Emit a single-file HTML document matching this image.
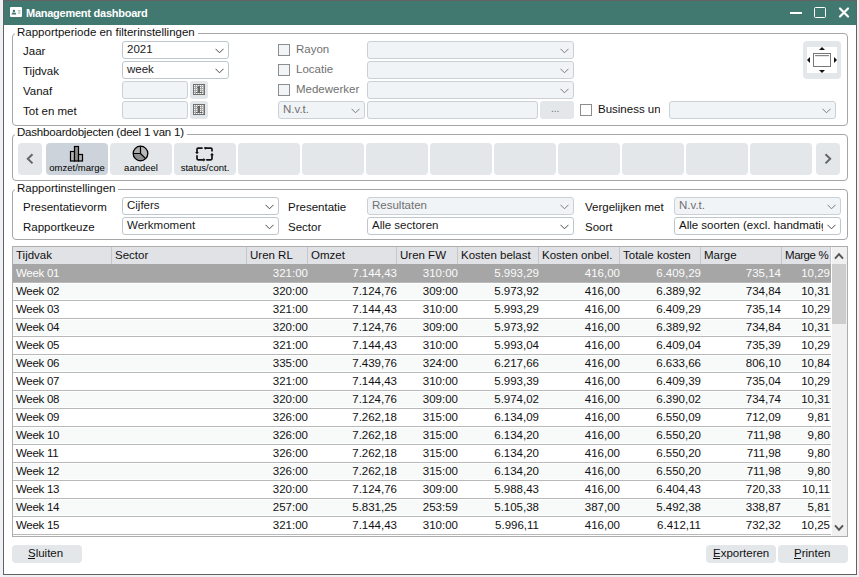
<!DOCTYPE html>
<html><head><meta charset="utf-8"><style>
html,body{margin:0;padding:0;}
body{width:859px;height:577px;position:relative;overflow:hidden;background:#eef2f4;font-family:"Liberation Sans",sans-serif;font-size:11px;color:#111;}
.b{position:absolute;}
.t{position:absolute;white-space:nowrap;line-height:14px;font-size:11.5px;}
.r{text-align:right;}
.g{color:#707070;}
.w{color:#fbfbfb;}
u{text-decoration:none;border-bottom:1px solid #1a1a1a;}
</style></head><body>

<div class="b" style="left:3px;top:0px;width:854px;height:575px;background:#ffffff;border:1px solid #646262;box-sizing:border-box"></div>
<div class="b" style="left:4px;top:1px;width:852px;height:24px;background:#417870"></div>
<svg class="b" style="left:10px;top:7px" width="12" height="10" viewBox="0 0 12 10"><rect x="0" y="0" width="12" height="10" rx="1" fill="#fff"/><circle cx="3.9" cy="3.9" r="1.2" fill="#417870"/><path d="M1.6 7.6 L1.6 6.9 Q1.6 5.6 3.9 5.6 Q6.2 5.6 6.2 6.9 L6.2 7.6 Z" fill="#417870"/><rect x="7.8" y="3.2" width="2.8" height="1.2" fill="#9fb9b5"/><rect x="7.8" y="5.4" width="2.8" height="1.2" fill="#9fb9b5"/></svg>
<div class="t" style="left:26px;top:6px;font-weight:bold;color:#fff;letter-spacing:-0.25px;font-size:11px">Management dashboard</div>
<div class="b" style="left:790px;top:12px;width:12px;height:2px;background:#fff"></div>
<div class="b" style="left:814px;top:7px;width:12px;height:11px;border:1.8px solid #fff;box-sizing:border-box;border-radius:1.5px"></div>
<svg class="b" style="left:838px;top:7px" width="12" height="11" viewBox="0 0 12 11"><path d="M2 1.5 L10 9.5 M10 1.5 L2 9.5" stroke="#fff" stroke-width="2.2" stroke-linecap="round"/></svg>
<div class="b" style="left:12px;top:33px;width:836px;height:93px;border:1px solid #a6a6a6;border-radius:4px;box-sizing:border-box"></div>
<div class="t " style="left:15px;top:25px;padding:0 3px 0 2px;background:linear-gradient(to bottom,transparent 7px,#fff 7px,#fff 10px,transparent 10px)">Rapportperiode en filterinstellingen</div>
<div class="b" style="left:12px;top:134px;width:836px;height:47px;border:1px solid #a6a6a6;border-radius:4px;box-sizing:border-box"></div>
<div class="t " style="left:15px;top:125px;letter-spacing:-0.2px;padding:0 3px 0 2px;background:linear-gradient(to bottom,transparent 8px,#fff 8px,#fff 11px,transparent 11px)">Dashboardobjecten (deel 1 van 1)</div>
<div class="b" style="left:12px;top:189px;width:836px;height:51px;border:1px solid #a6a6a6;border-radius:4px;box-sizing:border-box"></div>
<div class="t " style="left:15px;top:181px;padding:0 3px 0 2px;background:linear-gradient(to bottom,transparent 7px,#fff 7px,#fff 10px,transparent 10px)">Rapportinstellingen</div>
<div class="t " style="left:23px;top:44px;">Jaar</div>
<div class="t " style="left:23px;top:64px;">Tijdvak</div>
<div class="t " style="left:23px;top:84px;">Vanaf</div>
<div class="t " style="left:23px;top:104px;">Tot en met</div>
<div class="b" style="left:122px;top:41px;width:107px;height:18px;background:#ffffff;border:1px solid #bfc7ce;border-radius:3px;box-sizing:border-box"></div>
<div class="t " style="left:127px;top:42px;color:#1a1a1a">2021</div>
<svg class="b" style="left:215px;top:48px" width="9" height="6" viewBox="0 0 9 6"><path d="M0.5 0.8 L4.5 4.8 L8.5 0.8" fill="none" stroke="#4a4a4a" stroke-width="1"/></svg>
<div class="b" style="left:122px;top:61px;width:107px;height:18px;background:#ffffff;border:1px solid #bfc7ce;border-radius:3px;box-sizing:border-box"></div>
<div class="t " style="left:127px;top:62px;color:#1a1a1a">week</div>
<svg class="b" style="left:215px;top:68px" width="9" height="6" viewBox="0 0 9 6"><path d="M0.5 0.8 L4.5 4.8 L8.5 0.8" fill="none" stroke="#4a4a4a" stroke-width="1"/></svg>
<div class="b" style="left:122px;top:81px;width:66px;height:18px;background:#f1f4f7;border:1px solid #c9d0d6;border-radius:3px;box-sizing:border-box"></div>
<div class="b" style="left:122px;top:101px;width:66px;height:18px;background:#f1f4f7;border:1px solid #c9d0d6;border-radius:3px;box-sizing:border-box"></div>
<div class="b" style="left:190px;top:81px;width:18px;height:18px;background:#e3e7ea;border-radius:3px"></div>
<svg class="b" style="left:193px;top:84px" width="12" height="11" viewBox="0 0 12 11" shape-rendering="crispEdges"><rect x="0" y="0" width="12" height="11" fill="#707070"/><rect x="1" y="1" width="10" height="9" fill="#a8a8a8"/><rect x="1" y="1" width="1" height="1" fill="#f4f4f4"/><rect x="3" y="1" width="1" height="1" fill="#f4f4f4"/><rect x="5" y="1" width="1" height="1" fill="#f4f4f4"/><rect x="7" y="1" width="1" height="1" fill="#f4f4f4"/><rect x="9" y="1" width="1" height="1" fill="#f4f4f4"/><rect x="1" y="3" width="1" height="1" fill="#f4f4f4"/><rect x="3" y="3" width="1" height="1" fill="#f4f4f4"/><rect x="5" y="3" width="1" height="1" fill="#f4f4f4"/><rect x="7" y="3" width="1" height="1" fill="#f4f4f4"/><rect x="9" y="3" width="1" height="1" fill="#f4f4f4"/><rect x="1" y="5" width="1" height="1" fill="#f4f4f4"/><rect x="3" y="5" width="1" height="1" fill="#f4f4f4"/><rect x="5" y="5" width="1" height="1" fill="#f4f4f4"/><rect x="7" y="5" width="1" height="1" fill="#f4f4f4"/><rect x="9" y="5" width="1" height="1" fill="#f4f4f4"/><rect x="1" y="7" width="1" height="1" fill="#f4f4f4"/><rect x="3" y="7" width="1" height="1" fill="#f4f4f4"/><rect x="5" y="7" width="1" height="1" fill="#f4f4f4"/><rect x="7" y="7" width="1" height="1" fill="#f4f4f4"/><rect x="9" y="7" width="1" height="1" fill="#f4f4f4"/><rect x="1" y="9" width="1" height="1" fill="#f4f4f4"/><rect x="3" y="9" width="1" height="1" fill="#f4f4f4"/><rect x="5" y="9" width="1" height="1" fill="#f4f4f4"/><rect x="7" y="9" width="1" height="1" fill="#f4f4f4"/><rect x="9" y="9" width="1" height="1" fill="#f4f4f4"/><rect x="5" y="2" width="2" height="7" fill="#666"/><rect x="4" y="3" width="1" height="1" fill="#666"/><rect x="3" y="8" width="6" height="1" fill="#666"/></svg>
<div class="b" style="left:190px;top:101px;width:18px;height:18px;background:#e3e7ea;border-radius:3px"></div>
<svg class="b" style="left:193px;top:104px" width="12" height="11" viewBox="0 0 12 11" shape-rendering="crispEdges"><rect x="0" y="0" width="12" height="11" fill="#707070"/><rect x="1" y="1" width="10" height="9" fill="#a8a8a8"/><rect x="1" y="1" width="1" height="1" fill="#f4f4f4"/><rect x="3" y="1" width="1" height="1" fill="#f4f4f4"/><rect x="5" y="1" width="1" height="1" fill="#f4f4f4"/><rect x="7" y="1" width="1" height="1" fill="#f4f4f4"/><rect x="9" y="1" width="1" height="1" fill="#f4f4f4"/><rect x="1" y="3" width="1" height="1" fill="#f4f4f4"/><rect x="3" y="3" width="1" height="1" fill="#f4f4f4"/><rect x="5" y="3" width="1" height="1" fill="#f4f4f4"/><rect x="7" y="3" width="1" height="1" fill="#f4f4f4"/><rect x="9" y="3" width="1" height="1" fill="#f4f4f4"/><rect x="1" y="5" width="1" height="1" fill="#f4f4f4"/><rect x="3" y="5" width="1" height="1" fill="#f4f4f4"/><rect x="5" y="5" width="1" height="1" fill="#f4f4f4"/><rect x="7" y="5" width="1" height="1" fill="#f4f4f4"/><rect x="9" y="5" width="1" height="1" fill="#f4f4f4"/><rect x="1" y="7" width="1" height="1" fill="#f4f4f4"/><rect x="3" y="7" width="1" height="1" fill="#f4f4f4"/><rect x="5" y="7" width="1" height="1" fill="#f4f4f4"/><rect x="7" y="7" width="1" height="1" fill="#f4f4f4"/><rect x="9" y="7" width="1" height="1" fill="#f4f4f4"/><rect x="1" y="9" width="1" height="1" fill="#f4f4f4"/><rect x="3" y="9" width="1" height="1" fill="#f4f4f4"/><rect x="5" y="9" width="1" height="1" fill="#f4f4f4"/><rect x="7" y="9" width="1" height="1" fill="#f4f4f4"/><rect x="9" y="9" width="1" height="1" fill="#f4f4f4"/><rect x="5" y="2" width="2" height="7" fill="#666"/><rect x="4" y="3" width="1" height="1" fill="#666"/><rect x="3" y="8" width="6" height="1" fill="#666"/></svg>
<div class="b" style="left:278px;top:44px;width:12px;height:12px;background:#f2f5f7;border:1px solid #8c8c8c;box-sizing:border-box"></div>
<div class="t g" style="left:296px;top:42px;">Rayon</div>
<div class="b" style="left:278px;top:64px;width:12px;height:12px;background:#f2f5f7;border:1px solid #8c8c8c;box-sizing:border-box"></div>
<div class="t g" style="left:296px;top:62px;">Locatie</div>
<div class="b" style="left:278px;top:84px;width:12px;height:12px;background:#f2f5f7;border:1px solid #8c8c8c;box-sizing:border-box"></div>
<div class="t g" style="left:296px;top:82px;">Medewerker</div>
<div class="b" style="left:367px;top:41px;width:207px;height:18px;background:#f1f4f7;border:1px solid #c9d0d6;border-radius:3px;box-sizing:border-box"></div>
<svg class="b" style="left:560px;top:48px" width="9" height="6" viewBox="0 0 9 6"><path d="M0.5 0.8 L4.5 4.8 L8.5 0.8" fill="none" stroke="#7a7a7a" stroke-width="1"/></svg>
<div class="b" style="left:367px;top:61px;width:207px;height:18px;background:#f1f4f7;border:1px solid #c9d0d6;border-radius:3px;box-sizing:border-box"></div>
<svg class="b" style="left:560px;top:68px" width="9" height="6" viewBox="0 0 9 6"><path d="M0.5 0.8 L4.5 4.8 L8.5 0.8" fill="none" stroke="#7a7a7a" stroke-width="1"/></svg>
<div class="b" style="left:367px;top:81px;width:207px;height:18px;background:#f1f4f7;border:1px solid #c9d0d6;border-radius:3px;box-sizing:border-box"></div>
<svg class="b" style="left:560px;top:88px" width="9" height="6" viewBox="0 0 9 6"><path d="M0.5 0.8 L4.5 4.8 L8.5 0.8" fill="none" stroke="#7a7a7a" stroke-width="1"/></svg>
<div class="b" style="left:278px;top:101px;width:87px;height:18px;background:#f1f4f7;border:1px solid #c9d0d6;border-radius:3px;box-sizing:border-box"></div>
<div class="t " style="left:283px;top:102px;color:#707070">N.v.t.</div>
<svg class="b" style="left:351px;top:108px" width="9" height="6" viewBox="0 0 9 6"><path d="M0.5 0.8 L4.5 4.8 L8.5 0.8" fill="none" stroke="#7a7a7a" stroke-width="1"/></svg>
<div class="b" style="left:367px;top:101px;width:171px;height:18px;background:#f1f4f7;border:1px solid #c9d0d6;border-radius:3px;box-sizing:border-box"></div>
<div class="b" style="left:540px;top:101px;width:34px;height:18px;background:#e3e7ea;border-radius:3px"></div>
<div class="t g" style="left:551px;top:102px;font-size:10px">...</div>
<div class="b" style="left:580px;top:104px;width:12px;height:12px;background:#fff;border:1px solid #8c8c8c;box-sizing:border-box"></div>
<div class="t" style="left:598px;top:102px;width:62px;overflow:hidden">Business unit</div>
<div class="b" style="left:669px;top:101px;width:167px;height:18px;background:#f1f4f7;border:1px solid #c9d0d6;border-radius:3px;box-sizing:border-box"></div>
<svg class="b" style="left:822px;top:108px" width="9" height="6" viewBox="0 0 9 6"><path d="M0.5 0.8 L4.5 4.8 L8.5 0.8" fill="none" stroke="#7a7a7a" stroke-width="1"/></svg>
<div class="b" style="left:803px;top:41px;width:38px;height:38px;background:#e3e7ea;border-radius:4px"></div>
<div class="b" style="left:807px;top:47px;width:30px;height:26px;background:#fff"></div>
<svg class="b" style="left:807px;top:47px" width="30" height="26" viewBox="0 0 30 26">
<rect x="6.5" y="6.5" width="17" height="13" fill="#fff" stroke="#777" stroke-width="1"/>
<rect x="8" y="8" width="14" height="1.2" fill="#888"/>
<path d="M12 3 L15 0 L18 3 Z" fill="#111"/>
<path d="M12 23 L15 26 L18 23 Z" fill="#111"/>
<path d="M3 10 L0 13 L3 16 Z" fill="#111"/>
<path d="M27 10 L30 13 L27 16 Z" fill="#111"/>
</svg>
<div class="b" style="left:18px;top:143px;width:24px;height:32px;background:#e3e7ea;border-radius:4px"></div>
<svg class="b" style="left:26px;top:153px" width="8" height="12" viewBox="0 0 8 12"><path d="M6.5 1.2 L1.8 5.8 L6.5 10.4" fill="none" stroke="#666" stroke-width="2"/></svg>
<div class="b" style="left:46px;top:143px;width:62px;height:32px;background:#ccd3da;border-radius:4px"></div>
<div class="b" style="left:110px;top:143px;width:62px;height:32px;background:#e3e7ea;border-radius:4px"></div>
<div class="b" style="left:174px;top:143px;width:62px;height:32px;background:#e3e7ea;border-radius:4px"></div>
<div class="b" style="left:238px;top:143px;width:62px;height:32px;background:#e3e7ea;border-radius:4px"></div>
<div class="b" style="left:302px;top:143px;width:62px;height:32px;background:#e3e7ea;border-radius:4px"></div>
<div class="b" style="left:366px;top:143px;width:62px;height:32px;background:#e3e7ea;border-radius:4px"></div>
<div class="b" style="left:430px;top:143px;width:62px;height:32px;background:#e3e7ea;border-radius:4px"></div>
<div class="b" style="left:494px;top:143px;width:62px;height:32px;background:#e3e7ea;border-radius:4px"></div>
<div class="b" style="left:558px;top:143px;width:62px;height:32px;background:#e3e7ea;border-radius:4px"></div>
<div class="b" style="left:622px;top:143px;width:62px;height:32px;background:#e3e7ea;border-radius:4px"></div>
<div class="b" style="left:686px;top:143px;width:62px;height:32px;background:#e3e7ea;border-radius:4px"></div>
<div class="b" style="left:750px;top:143px;width:62px;height:32px;background:#e3e7ea;border-radius:4px"></div>
<div class="b" style="left:816px;top:143px;width:24px;height:32px;background:#e3e7ea;border-radius:4px"></div>
<svg class="b" style="left:824px;top:153px" width="8" height="12" viewBox="0 0 8 12"><path d="M1.5 1.2 L6.2 5.8 L1.5 10.4" fill="none" stroke="#666" stroke-width="2"/></svg>
<svg class="b" style="left:69px;top:145px" width="16" height="17" viewBox="0 0 16 17">
<rect x="1.5" y="6.5" width="4" height="9.5" fill="#b5b5b5" stroke="#000" stroke-width="1.2"/>
<rect x="5.5" y="1.5" width="4" height="14.5" fill="#8e8e8e" stroke="#000" stroke-width="1.2"/>
<rect x="9.5" y="9.5" width="4" height="6.5" fill="#b0b0b0" stroke="#000" stroke-width="1.2"/>
</svg>
<svg class="b" style="left:132px;top:145px" width="17" height="17" viewBox="0 0 17 17">
<circle cx="8.5" cy="8.5" r="7.3" fill="#b9b9b9"/>
<path d="M8.5 8.5 L8.5 1.2 A7.3 7.3 0 0 0 1.2 8.5 Z" fill="#ababab"/>
<path d="M8.5 8.5 L1.2 8.5 A7.3 7.3 0 0 0 13.66 13.66 Z" fill="#8f8f8f"/>
<circle cx="8.5" cy="8.5" r="7.3" fill="none" stroke="#000" stroke-width="1.3"/>
<path d="M8.5 1.2 L8.5 8.5 L1.2 8.5 M8.5 8.5 L13.66 13.66" fill="none" stroke="#000" stroke-width="1.2"/>
</svg>
<svg class="b" style="left:194px;top:146px" width="22" height="17" viewBox="0 0 22 17">
<g fill="none" stroke="#111" stroke-width="1.7" stroke-linejoin="round">
<path d="M8.6 2.1 H4.2 Q3 2.1 3 3.3 V6.2"/>
<path d="M10.8 2.1 H16.8 Q18 2.1 18 3.3 V5.5"/>
<path d="M18 8.6 V12.6 Q18 13.8 16.8 13.8 H12.2"/>
<path d="M3 9.2 V12.6 Q3 13.8 4.2 13.8 H9.6"/>
</g>
<g fill="#111">
<path d="M1.1 6 L4.9 6 L3 8.2 Z"/>
<path d="M9.9 1.3 L12.6 1.3 L11.2 3.9 Z"/>
<path d="M16.1 9.2 L19.9 9.2 L18 6.8 Z"/>
<path d="M9.3 11.9 L9.3 15.7 L11.6 13.8 Z"/>
</g>
</svg>
<div class="t" style="left:46px;width:62px;text-align:center;top:161px;font-size:9.5px;color:#000;">omzet/marge</div>
<div class="t" style="left:110px;width:62px;text-align:center;top:161px;font-size:9.5px;color:#000;">aandeel</div>
<div class="t" style="left:174px;width:62px;text-align:center;top:161px;font-size:9.5px;color:#000;">status/cont.</div>
<div class="t " style="left:23px;top:200px;">Presentatievorm</div>
<div class="t " style="left:23px;top:220px;">Rapportkeuze</div>
<div class="b" style="left:122px;top:197px;width:157px;height:18px;background:#ffffff;border:1px solid #bfc7ce;border-radius:3px;box-sizing:border-box"></div>
<div class="t " style="left:127px;top:198px;color:#1a1a1a">Cijfers</div>
<svg class="b" style="left:265px;top:204px" width="9" height="6" viewBox="0 0 9 6"><path d="M0.5 0.8 L4.5 4.8 L8.5 0.8" fill="none" stroke="#4a4a4a" stroke-width="1"/></svg>
<div class="b" style="left:122px;top:217px;width:157px;height:18px;background:#ffffff;border:1px solid #bfc7ce;border-radius:3px;box-sizing:border-box"></div>
<div class="t " style="left:127px;top:218px;color:#1a1a1a">Werkmoment</div>
<svg class="b" style="left:265px;top:224px" width="9" height="6" viewBox="0 0 9 6"><path d="M0.5 0.8 L4.5 4.8 L8.5 0.8" fill="none" stroke="#4a4a4a" stroke-width="1"/></svg>
<div class="t " style="left:288px;top:200px;">Presentatie</div>
<div class="t " style="left:288px;top:220px;">Sector</div>
<div class="b" style="left:367px;top:197px;width:207px;height:18px;background:#f1f4f7;border:1px solid #c9d0d6;border-radius:3px;box-sizing:border-box"></div>
<div class="t " style="left:372px;top:198px;color:#707070">Resultaten</div>
<svg class="b" style="left:560px;top:204px" width="9" height="6" viewBox="0 0 9 6"><path d="M0.5 0.8 L4.5 4.8 L8.5 0.8" fill="none" stroke="#7a7a7a" stroke-width="1"/></svg>
<div class="b" style="left:367px;top:217px;width:207px;height:18px;background:#ffffff;border:1px solid #bfc7ce;border-radius:3px;box-sizing:border-box"></div>
<div class="t " style="left:372px;top:218px;color:#1a1a1a">Alle sectoren</div>
<svg class="b" style="left:560px;top:224px" width="9" height="6" viewBox="0 0 9 6"><path d="M0.5 0.8 L4.5 4.8 L8.5 0.8" fill="none" stroke="#4a4a4a" stroke-width="1"/></svg>
<div class="t " style="left:585px;top:200px;">Vergelijken met</div>
<div class="t " style="left:585px;top:220px;">Soort</div>
<div class="b" style="left:674px;top:197px;width:167px;height:18px;background:#f1f4f7;border:1px solid #c9d0d6;border-radius:3px;box-sizing:border-box"></div>
<div class="t " style="left:679px;top:198px;color:#707070">N.v.t.</div>
<svg class="b" style="left:827px;top:204px" width="9" height="6" viewBox="0 0 9 6"><path d="M0.5 0.8 L4.5 4.8 L8.5 0.8" fill="none" stroke="#7a7a7a" stroke-width="1"/></svg>
<div class="b" style="left:674px;top:217px;width:167px;height:18px;background:#fff;border:1px solid #bfc7ce;border-radius:3px;box-sizing:border-box"></div>
<div class="t" style="left:679px;top:218px;width:144px;overflow:hidden">Alle soorten (excl. handmatig)</div>
<svg class="b" style="left:827px;top:224px" width="9" height="6" viewBox="0 0 9 6"><path d="M0.5 0.8 L4.5 4.8 L8.5 0.8" fill="none" stroke="#4a4a4a" stroke-width="1"/></svg>
<div class="b" style="left:12px;top:246px;width:836px;height:291px;border:1px solid #adadad;box-sizing:border-box;background:#fff"></div>
<div class="b" style="left:13px;top:247px;width:818px;height:17px;background:#e0e2e6"></div>
<div class="b" style="left:111px;top:247px;width:1px;height:17px;background:#c4c7cb"></div>
<div class="b" style="left:246px;top:247px;width:1px;height:17px;background:#c4c7cb"></div>
<div class="b" style="left:307px;top:247px;width:1px;height:17px;background:#c4c7cb"></div>
<div class="b" style="left:396px;top:247px;width:1px;height:17px;background:#c4c7cb"></div>
<div class="b" style="left:457px;top:247px;width:1px;height:17px;background:#c4c7cb"></div>
<div class="b" style="left:538px;top:247px;width:1px;height:17px;background:#c4c7cb"></div>
<div class="b" style="left:619px;top:247px;width:1px;height:17px;background:#c4c7cb"></div>
<div class="b" style="left:700px;top:247px;width:1px;height:17px;background:#c4c7cb"></div>
<div class="b" style="left:781px;top:247px;width:1px;height:17px;background:#c4c7cb"></div>
<div class="b" style="left:830px;top:247px;width:1px;height:17px;background:#c4c7cb"></div>
<div class="t " style="left:16px;top:248px;">Tijdvak</div>
<div class="t " style="left:115px;top:248px;">Sector</div>
<div class="t " style="left:250px;top:248px;">Uren RL</div>
<div class="t " style="left:311px;top:248px;">Omzet</div>
<div class="t " style="left:400px;top:248px;">Uren FW</div>
<div class="t " style="left:461px;top:248px;">Kosten belast</div>
<div class="t " style="left:542px;top:248px;">Kosten onbel.</div>
<div class="t " style="left:623px;top:248px;">Totale kosten</div>
<div class="t " style="left:704px;top:248px;">Marge</div>
<div class="t " style="left:785px;top:248px;letter-spacing:-0.4px">Marge %</div>
<div class="b" style="left:832px;top:247px;width:15px;height:289px;background:#f0f0f0"></div>
<div class="b" style="left:832px;top:264px;width:14px;height:60px;background:#cdcdcd"></div>
<svg class="b" style="left:834px;top:252px" width="10" height="8" viewBox="0 0 10 8"><path d="M1 6.6 L5 2.2 L9 6.6" fill="none" stroke="#555" stroke-width="2"/></svg>
<svg class="b" style="left:834px;top:524px" width="10" height="8" viewBox="0 0 10 8"><path d="M1 1.4 L5 5.8 L9 1.4" fill="none" stroke="#555" stroke-width="2"/></svg>
<div class="b" style="left:13px;top:264px;width:818px;height:19px;background:#a6a6a6"></div>
<div class="t w" style="left:16px;top:266px;letter-spacing:-0.3px">Week 01</div>
<div class="t r w" style="left:188px;width:120px;top:266px;">321:00</div>
<div class="t r w" style="left:277px;width:120px;top:266px;">7.144,43</div>
<div class="t r w" style="left:338px;width:120px;top:266px;">310:00</div>
<div class="t r w" style="left:419px;width:120px;top:266px;">5.993,29</div>
<div class="t r w" style="left:500px;width:120px;top:266px;">416,00</div>
<div class="t r w" style="left:581px;width:120px;top:266px;">6.409,29</div>
<div class="t r w" style="left:661px;width:120px;top:266px;">735,14</div>
<div class="t r w" style="left:710px;width:120px;top:266px;">10,29</div>
<div class="b" style="left:13px;top:282px;width:818px;height:1px;background:#b9b9b9"></div>
<div class="b" style="left:13px;top:284px;width:818px;height:15px;background:#f8fafa"></div>
<div class="t " style="left:16px;top:284px;letter-spacing:-0.3px">Week 02</div>
<div class="t r " style="left:188px;width:120px;top:284px;">320:00</div>
<div class="t r " style="left:277px;width:120px;top:284px;">7.124,76</div>
<div class="t r " style="left:338px;width:120px;top:284px;">309:00</div>
<div class="t r " style="left:419px;width:120px;top:284px;">5.973,92</div>
<div class="t r " style="left:500px;width:120px;top:284px;">416,00</div>
<div class="t r " style="left:581px;width:120px;top:284px;">6.389,92</div>
<div class="t r " style="left:661px;width:120px;top:284px;">734,84</div>
<div class="t r " style="left:710px;width:120px;top:284px;">10,31</div>
<div class="b" style="left:13px;top:300px;width:818px;height:1px;background:#b9b9b9"></div>
<div class="t " style="left:16px;top:302px;letter-spacing:-0.3px">Week 03</div>
<div class="t r " style="left:188px;width:120px;top:302px;">321:00</div>
<div class="t r " style="left:277px;width:120px;top:302px;">7.144,43</div>
<div class="t r " style="left:338px;width:120px;top:302px;">310:00</div>
<div class="t r " style="left:419px;width:120px;top:302px;">5.993,29</div>
<div class="t r " style="left:500px;width:120px;top:302px;">416,00</div>
<div class="t r " style="left:581px;width:120px;top:302px;">6.409,29</div>
<div class="t r " style="left:661px;width:120px;top:302px;">735,14</div>
<div class="t r " style="left:710px;width:120px;top:302px;">10,29</div>
<div class="b" style="left:13px;top:318px;width:818px;height:1px;background:#b9b9b9"></div>
<div class="b" style="left:13px;top:320px;width:818px;height:15px;background:#f8fafa"></div>
<div class="t " style="left:16px;top:320px;letter-spacing:-0.3px">Week 04</div>
<div class="t r " style="left:188px;width:120px;top:320px;">320:00</div>
<div class="t r " style="left:277px;width:120px;top:320px;">7.124,76</div>
<div class="t r " style="left:338px;width:120px;top:320px;">309:00</div>
<div class="t r " style="left:419px;width:120px;top:320px;">5.973,92</div>
<div class="t r " style="left:500px;width:120px;top:320px;">416,00</div>
<div class="t r " style="left:581px;width:120px;top:320px;">6.389,92</div>
<div class="t r " style="left:661px;width:120px;top:320px;">734,84</div>
<div class="t r " style="left:710px;width:120px;top:320px;">10,31</div>
<div class="b" style="left:13px;top:336px;width:818px;height:1px;background:#b9b9b9"></div>
<div class="t " style="left:16px;top:338px;letter-spacing:-0.3px">Week 05</div>
<div class="t r " style="left:188px;width:120px;top:338px;">321:00</div>
<div class="t r " style="left:277px;width:120px;top:338px;">7.144,43</div>
<div class="t r " style="left:338px;width:120px;top:338px;">310:00</div>
<div class="t r " style="left:419px;width:120px;top:338px;">5.993,04</div>
<div class="t r " style="left:500px;width:120px;top:338px;">416,00</div>
<div class="t r " style="left:581px;width:120px;top:338px;">6.409,04</div>
<div class="t r " style="left:661px;width:120px;top:338px;">735,39</div>
<div class="t r " style="left:710px;width:120px;top:338px;">10,29</div>
<div class="b" style="left:13px;top:354px;width:818px;height:1px;background:#b9b9b9"></div>
<div class="b" style="left:13px;top:356px;width:818px;height:15px;background:#f8fafa"></div>
<div class="t " style="left:16px;top:356px;letter-spacing:-0.3px">Week 06</div>
<div class="t r " style="left:188px;width:120px;top:356px;">335:00</div>
<div class="t r " style="left:277px;width:120px;top:356px;">7.439,76</div>
<div class="t r " style="left:338px;width:120px;top:356px;">324:00</div>
<div class="t r " style="left:419px;width:120px;top:356px;">6.217,66</div>
<div class="t r " style="left:500px;width:120px;top:356px;">416,00</div>
<div class="t r " style="left:581px;width:120px;top:356px;">6.633,66</div>
<div class="t r " style="left:661px;width:120px;top:356px;">806,10</div>
<div class="t r " style="left:710px;width:120px;top:356px;">10,84</div>
<div class="b" style="left:13px;top:372px;width:818px;height:1px;background:#b9b9b9"></div>
<div class="t " style="left:16px;top:374px;letter-spacing:-0.3px">Week 07</div>
<div class="t r " style="left:188px;width:120px;top:374px;">321:00</div>
<div class="t r " style="left:277px;width:120px;top:374px;">7.144,43</div>
<div class="t r " style="left:338px;width:120px;top:374px;">310:00</div>
<div class="t r " style="left:419px;width:120px;top:374px;">5.993,39</div>
<div class="t r " style="left:500px;width:120px;top:374px;">416,00</div>
<div class="t r " style="left:581px;width:120px;top:374px;">6.409,39</div>
<div class="t r " style="left:661px;width:120px;top:374px;">735,04</div>
<div class="t r " style="left:710px;width:120px;top:374px;">10,29</div>
<div class="b" style="left:13px;top:390px;width:818px;height:1px;background:#b9b9b9"></div>
<div class="b" style="left:13px;top:392px;width:818px;height:15px;background:#f8fafa"></div>
<div class="t " style="left:16px;top:392px;letter-spacing:-0.3px">Week 08</div>
<div class="t r " style="left:188px;width:120px;top:392px;">320:00</div>
<div class="t r " style="left:277px;width:120px;top:392px;">7.124,76</div>
<div class="t r " style="left:338px;width:120px;top:392px;">309:00</div>
<div class="t r " style="left:419px;width:120px;top:392px;">5.974,02</div>
<div class="t r " style="left:500px;width:120px;top:392px;">416,00</div>
<div class="t r " style="left:581px;width:120px;top:392px;">6.390,02</div>
<div class="t r " style="left:661px;width:120px;top:392px;">734,74</div>
<div class="t r " style="left:710px;width:120px;top:392px;">10,31</div>
<div class="b" style="left:13px;top:408px;width:818px;height:1px;background:#b9b9b9"></div>
<div class="t " style="left:16px;top:410px;letter-spacing:-0.3px">Week 09</div>
<div class="t r " style="left:188px;width:120px;top:410px;">326:00</div>
<div class="t r " style="left:277px;width:120px;top:410px;">7.262,18</div>
<div class="t r " style="left:338px;width:120px;top:410px;">315:00</div>
<div class="t r " style="left:419px;width:120px;top:410px;">6.134,09</div>
<div class="t r " style="left:500px;width:120px;top:410px;">416,00</div>
<div class="t r " style="left:581px;width:120px;top:410px;">6.550,09</div>
<div class="t r " style="left:661px;width:120px;top:410px;">712,09</div>
<div class="t r " style="left:710px;width:120px;top:410px;">9,81</div>
<div class="b" style="left:13px;top:426px;width:818px;height:1px;background:#b9b9b9"></div>
<div class="b" style="left:13px;top:428px;width:818px;height:15px;background:#f8fafa"></div>
<div class="t " style="left:16px;top:428px;letter-spacing:-0.3px">Week 10</div>
<div class="t r " style="left:188px;width:120px;top:428px;">326:00</div>
<div class="t r " style="left:277px;width:120px;top:428px;">7.262,18</div>
<div class="t r " style="left:338px;width:120px;top:428px;">315:00</div>
<div class="t r " style="left:419px;width:120px;top:428px;">6.134,20</div>
<div class="t r " style="left:500px;width:120px;top:428px;">416,00</div>
<div class="t r " style="left:581px;width:120px;top:428px;">6.550,20</div>
<div class="t r " style="left:661px;width:120px;top:428px;">711,98</div>
<div class="t r " style="left:710px;width:120px;top:428px;">9,80</div>
<div class="b" style="left:13px;top:444px;width:818px;height:1px;background:#b9b9b9"></div>
<div class="t " style="left:16px;top:446px;letter-spacing:-0.3px">Week 11</div>
<div class="t r " style="left:188px;width:120px;top:446px;">326:00</div>
<div class="t r " style="left:277px;width:120px;top:446px;">7.262,18</div>
<div class="t r " style="left:338px;width:120px;top:446px;">315:00</div>
<div class="t r " style="left:419px;width:120px;top:446px;">6.134,20</div>
<div class="t r " style="left:500px;width:120px;top:446px;">416,00</div>
<div class="t r " style="left:581px;width:120px;top:446px;">6.550,20</div>
<div class="t r " style="left:661px;width:120px;top:446px;">711,98</div>
<div class="t r " style="left:710px;width:120px;top:446px;">9,80</div>
<div class="b" style="left:13px;top:462px;width:818px;height:1px;background:#b9b9b9"></div>
<div class="b" style="left:13px;top:464px;width:818px;height:15px;background:#f8fafa"></div>
<div class="t " style="left:16px;top:464px;letter-spacing:-0.3px">Week 12</div>
<div class="t r " style="left:188px;width:120px;top:464px;">326:00</div>
<div class="t r " style="left:277px;width:120px;top:464px;">7.262,18</div>
<div class="t r " style="left:338px;width:120px;top:464px;">315:00</div>
<div class="t r " style="left:419px;width:120px;top:464px;">6.134,20</div>
<div class="t r " style="left:500px;width:120px;top:464px;">416,00</div>
<div class="t r " style="left:581px;width:120px;top:464px;">6.550,20</div>
<div class="t r " style="left:661px;width:120px;top:464px;">711,98</div>
<div class="t r " style="left:710px;width:120px;top:464px;">9,80</div>
<div class="b" style="left:13px;top:480px;width:818px;height:1px;background:#b9b9b9"></div>
<div class="t " style="left:16px;top:482px;letter-spacing:-0.3px">Week 13</div>
<div class="t r " style="left:188px;width:120px;top:482px;">320:00</div>
<div class="t r " style="left:277px;width:120px;top:482px;">7.124,76</div>
<div class="t r " style="left:338px;width:120px;top:482px;">309:00</div>
<div class="t r " style="left:419px;width:120px;top:482px;">5.988,43</div>
<div class="t r " style="left:500px;width:120px;top:482px;">416,00</div>
<div class="t r " style="left:581px;width:120px;top:482px;">6.404,43</div>
<div class="t r " style="left:661px;width:120px;top:482px;">720,33</div>
<div class="t r " style="left:710px;width:120px;top:482px;">10,11</div>
<div class="b" style="left:13px;top:498px;width:818px;height:1px;background:#b9b9b9"></div>
<div class="b" style="left:13px;top:500px;width:818px;height:15px;background:#f8fafa"></div>
<div class="t " style="left:16px;top:500px;letter-spacing:-0.3px">Week 14</div>
<div class="t r " style="left:188px;width:120px;top:500px;">257:00</div>
<div class="t r " style="left:277px;width:120px;top:500px;">5.831,25</div>
<div class="t r " style="left:338px;width:120px;top:500px;">253:59</div>
<div class="t r " style="left:419px;width:120px;top:500px;">5.105,38</div>
<div class="t r " style="left:500px;width:120px;top:500px;">387,00</div>
<div class="t r " style="left:581px;width:120px;top:500px;">5.492,38</div>
<div class="t r " style="left:661px;width:120px;top:500px;">338,87</div>
<div class="t r " style="left:710px;width:120px;top:500px;">5,81</div>
<div class="b" style="left:13px;top:516px;width:818px;height:1px;background:#b9b9b9"></div>
<div class="t " style="left:16px;top:518px;letter-spacing:-0.3px">Week 15</div>
<div class="t r " style="left:188px;width:120px;top:518px;">321:00</div>
<div class="t r " style="left:277px;width:120px;top:518px;">7.144,43</div>
<div class="t r " style="left:338px;width:120px;top:518px;">310:00</div>
<div class="t r " style="left:419px;width:120px;top:518px;">5.996,11</div>
<div class="t r " style="left:500px;width:120px;top:518px;">416,00</div>
<div class="t r " style="left:581px;width:120px;top:518px;">6.412,11</div>
<div class="t r " style="left:661px;width:120px;top:518px;">732,32</div>
<div class="t r " style="left:710px;width:120px;top:518px;">10,25</div>
<div class="b" style="left:13px;top:534px;width:818px;height:1px;background:#b9b9b9"></div>
<div class="b" style="left:12px;top:545px;width:70px;height:18px;background:#e3e7ea;border-radius:4px"></div>
<div class="t " style="left:28px;top:546px;">Sluiten</div>
<div class="b" style="left:28px;top:558px;width:7px;height:1px;background:#111"></div>
<div class="b" style="left:706px;top:545px;width:70px;height:18px;background:#e3e7ea;border-radius:4px"></div>
<div class="t " style="left:713px;top:546px;">Exporteren</div>
<div class="b" style="left:713px;top:558px;width:7px;height:1px;background:#111"></div>
<div class="b" style="left:778px;top:545px;width:70px;height:18px;background:#e3e7ea;border-radius:4px"></div>
<div class="t " style="left:794px;top:546px;">Printen</div>
<div class="b" style="left:794px;top:558px;width:7px;height:1px;background:#111"></div>
</body></html>
